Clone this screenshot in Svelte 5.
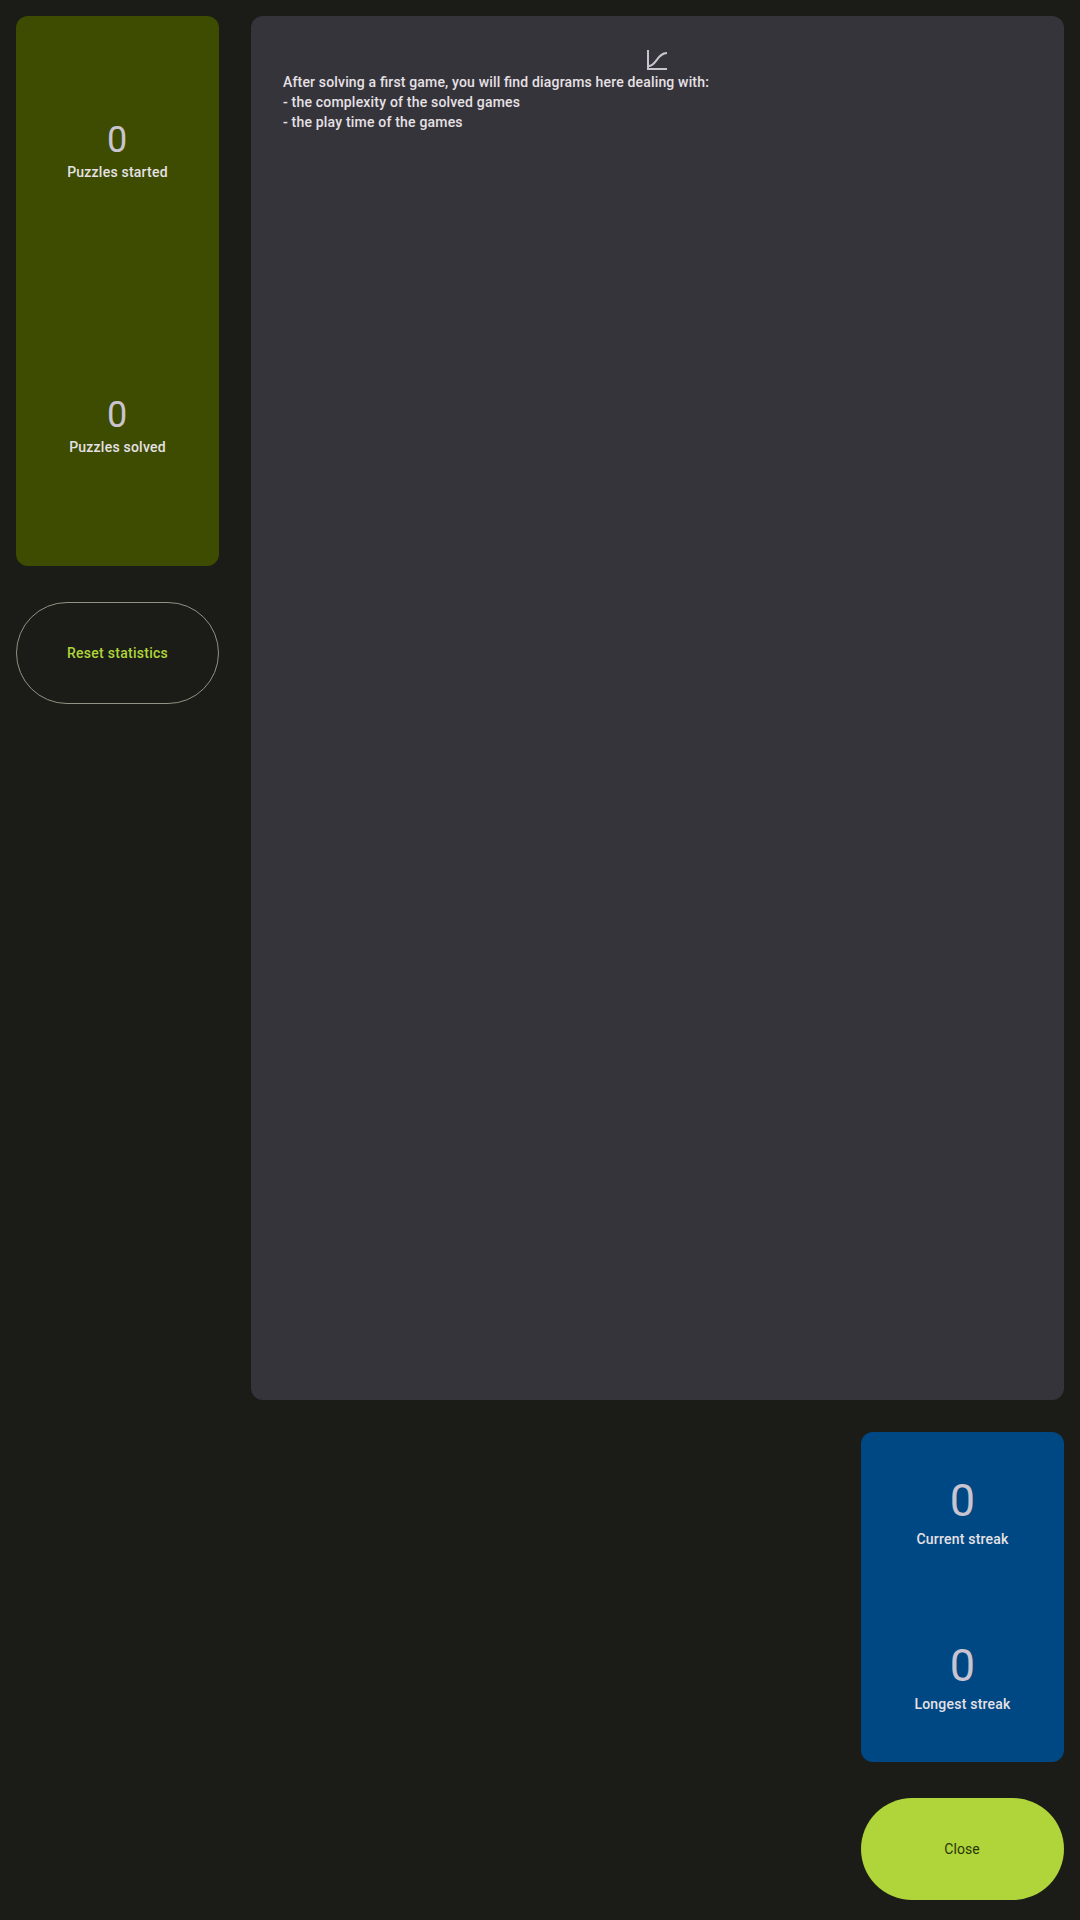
<script>
  const puzzles = [
    { value: 0, label: 'Puzzles started' },
    { value: 0, label: 'Puzzles solved' },
  ];
  const streaks = [
    { value: 0, label: 'Current streak' },
    { value: 0, label: 'Longest streak' },
  ];
</script>

{#snippet stats(items)}
  {#each items as item}
    <div class="stat">
      <span class="value">{item.value}</span>
      <span class="label">{item.label}</span>
    </div>
  {/each}
{/snippet}

<main class="screen">
  <aside class="side">
    <section class="card puzzles">{@render stats(puzzles)}</section>
    <button class="btn outlined">Reset statistics</button>
  </aside>
  <div class="content">
    <section class="card diagrams">
      <svg class="icon" viewBox="0 0 24 24" width="24" height="24" fill="none" stroke="#cac4d0" stroke-width="2">
        <path d="M3 2V21H22" />
        <path d="M3.5 18C11.5 18 12 5 22 5" />
      </svg>
      <p>After solving a first game, you will find diagrams here dealing with:</p>
      <p class="item">- the complexity of the solved games</p>
      <p class="item">- the play time of the games</p>
    </section>
    <div class="end">
      <section class="card streaks">{@render stats(streaks)}</section>
      <button class="btn filled">Close</button>
    </div>
  </div>
</main>

<style>
  :global(body) {
    margin: 0;
    background: #1b1c17;
  }
  .screen {
    box-sizing: border-box;
    height: 1920px;
    padding: 16px 16px 20px;
    display: flex;
    gap: 32px;
    background: #1b1c17;
    font: 500 14px/20px Roboto, sans-serif;
    letter-spacing: 0.22px;
    color: #e6e1e5;
  }
  .side {
    width: 203px;
    display: flex;
    flex-direction: column;
    gap: 36px;
  }
  .content {
    flex: 1;
    display: flex;
    flex-direction: column;
    align-items: flex-end;
    gap: 32px;
  }
  .end {
    width: 203px;
    display: flex;
    flex-direction: column;
    gap: 36px;
  }
  .card {
    box-sizing: border-box;
    border-radius: 12px;
    display: flex;
    flex-direction: column;
  }
  .puzzles {
    height: 550px;
    background: #3d4c00;
  }
  .streaks {
    height: 330px;
    background: #004884;
  }
  .diagrams {
    flex: 1;
    align-self: stretch;
    padding: 32px;
    background: #36343b;
  }
  .icon {
    align-self: center;
    flex: none;
    margin-right: 2px;
  }
  p {
    margin: 0;
    letter-spacing: 0.165px;
    font-feature-settings: 'liga' 1;
  }
  .item {
    letter-spacing: 0.19px;
  }
  .stat {
    flex: 1;
    display: flex;
    flex-direction: column;
    align-items: center;
    box-sizing: border-box;
  }
  .puzzles .stat {
    padding-top: 102px;
  }
  .streaks .stat {
    padding-top: 43px;
  }
  .value {
    color: #cac4d0;
    font-weight: 400;
    letter-spacing: 0;
  }
  .puzzles .value {
    font-size: 36px;
    line-height: 44px;
    margin-right: 1px;
  }
  .streaks .value {
    font-size: 45px;
    line-height: 52px;
    margin-bottom: 2px;
  }
  .btn {
    box-sizing: border-box;
    height: 102px;
    flex: none;
    border: 0;
    padding: 0;
    border-radius: 51px;
    background: none;
    font: inherit;
    letter-spacing: 0.27px;
  }
  .outlined {
    border: 1px solid #919283;
    color: #afd53a;
  }
  .filled {
    background: #afd53a;
    color: #293500;
    font-weight: 450;
    letter-spacing: 0.1px;
    padding-right: 1px;
  }
</style>
